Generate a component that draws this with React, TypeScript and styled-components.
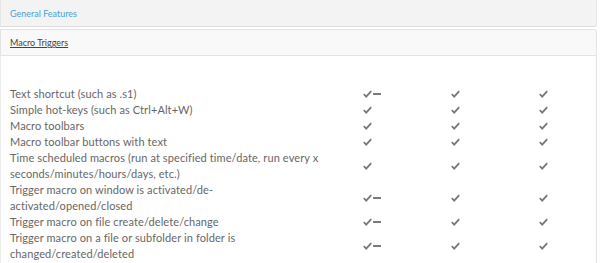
import styled, { createGlobalStyle } from 'styled-components'

type Mark = 'check' | 'partial'

type Feature = {
  label: string;
  marks: Mark[];
}

const features: Feature[] = [
  { label: 'Text shortcut (such as .s1)', marks: ['partial', 'check', 'check'] },
  { label: 'Simple hot-keys (such as Ctrl+Alt+W)', marks: ['check', 'check', 'check'] },
  { label: 'Macro toolbars', marks: ['check', 'check', 'check'] },
  { label: 'Macro toolbar buttons with text', marks: ['check', 'check', 'check'] },
  { label: 'Time scheduled macros (run at specified time/date, run every x seconds/minutes/hours/days, etc.)', marks: ['check', 'check', 'check'] },
  { label: 'Trigger macro on window is activated/de-activated/opened/closed', marks: ['partial', 'check', 'check'] },
  { label: 'Trigger macro on file create/delete/change', marks: ['partial', 'check', 'check'] },
  { label: 'Trigger macro on a file or subfolder in folder is changed/created/deleted', marks: ['partial', 'check', 'check'] },
]

const Global = createGlobalStyle`
  body {
    margin: 0;
    background: #fff;
    font-family: Lato, "Open Sans", sans-serif;
  }
`

function Tick() {
  return (
    <svg width="9" height="8" viewBox="0 0 9 8">
      <path d="M0.8 4.2 L3.2 6.6 L8.2 1.2" fill="none" stroke="#7a7a7a" strokeWidth="1.9" />
    </svg>
  )
}

function MarkCell({ mark }: { mark: Mark }) {
  return (
    <Cell>
      <Tick />
      {mark === 'partial' && <Dash />}
    </Cell>
  )
}

export default function App() {
  return (
    <>
      <Global />
      <Wrap>
        <Heading>General Features</Heading>
        <SubHeading><span>Macro Triggers</span></SubHeading>
        <Body>
          <Table>
            {features.map((f) => (
              <Row key={f.label}>
                <Label>{f.label}</Label>
                {f.marks.map((m, i) => (
                  <MarkCell key={i} mark={m} />
                ))}
              </Row>
            ))}
          </Table>
        </Body>
      </Wrap>
    </>
  )
}

const Wrap = styled.div`
  width: 597px;
  display: flex;
  flex-direction: column;
`

const Heading = styled.div`
  height: 27px;
  display: flex;
  align-items: center;
  padding: 0 9px;
  background: #f3f3f3;
  border: 1px solid #e6e6e6;
  border-top: none;
  border-bottom: 1px solid #dcdcdc;
  border-radius: 0 0 3px 0;
  color: #4d9fd6;
  font-size: 9px;
  box-sizing: border-box;
`

const SubHeading = styled.div`
  margin-top: 2px;
  height: 27px;
  display: flex;
  align-items: center;
  padding: 0 9px;
  background: #f9f9f9;
  border: 1px solid #e3e3e3;
  border-radius: 0 3px 0 0;
  box-sizing: border-box;
  color: #444;
  font-size: 9px;

  span {
    text-decoration: underline;
  }
`

const Body = styled.div`
  border-left: 1px solid #ececec;
  border-right: 1px solid #e3e3e3;
  padding: 30px 0 2px 9px;
`

const Table = styled.div`
  display: flex;
  flex-direction: column;
`

const Row = styled.div`
  display: grid;
  grid-template-columns: 313px 88px 88px 88px;
  align-items: center;
`

const Label = styled.div`
  color: #666;
  font-size: 11px;
  line-height: 16px;
  letter-spacing: 0.1px;
`

const Cell = styled.div`
  display: flex;
  align-items: center;
  justify-content: center;
  gap: 1px;
`

const Dash = styled.span`
  display: block;
  width: 8px;
  height: 2px;
  background: #7a7a7a;
  margin-right: -9px;
`
